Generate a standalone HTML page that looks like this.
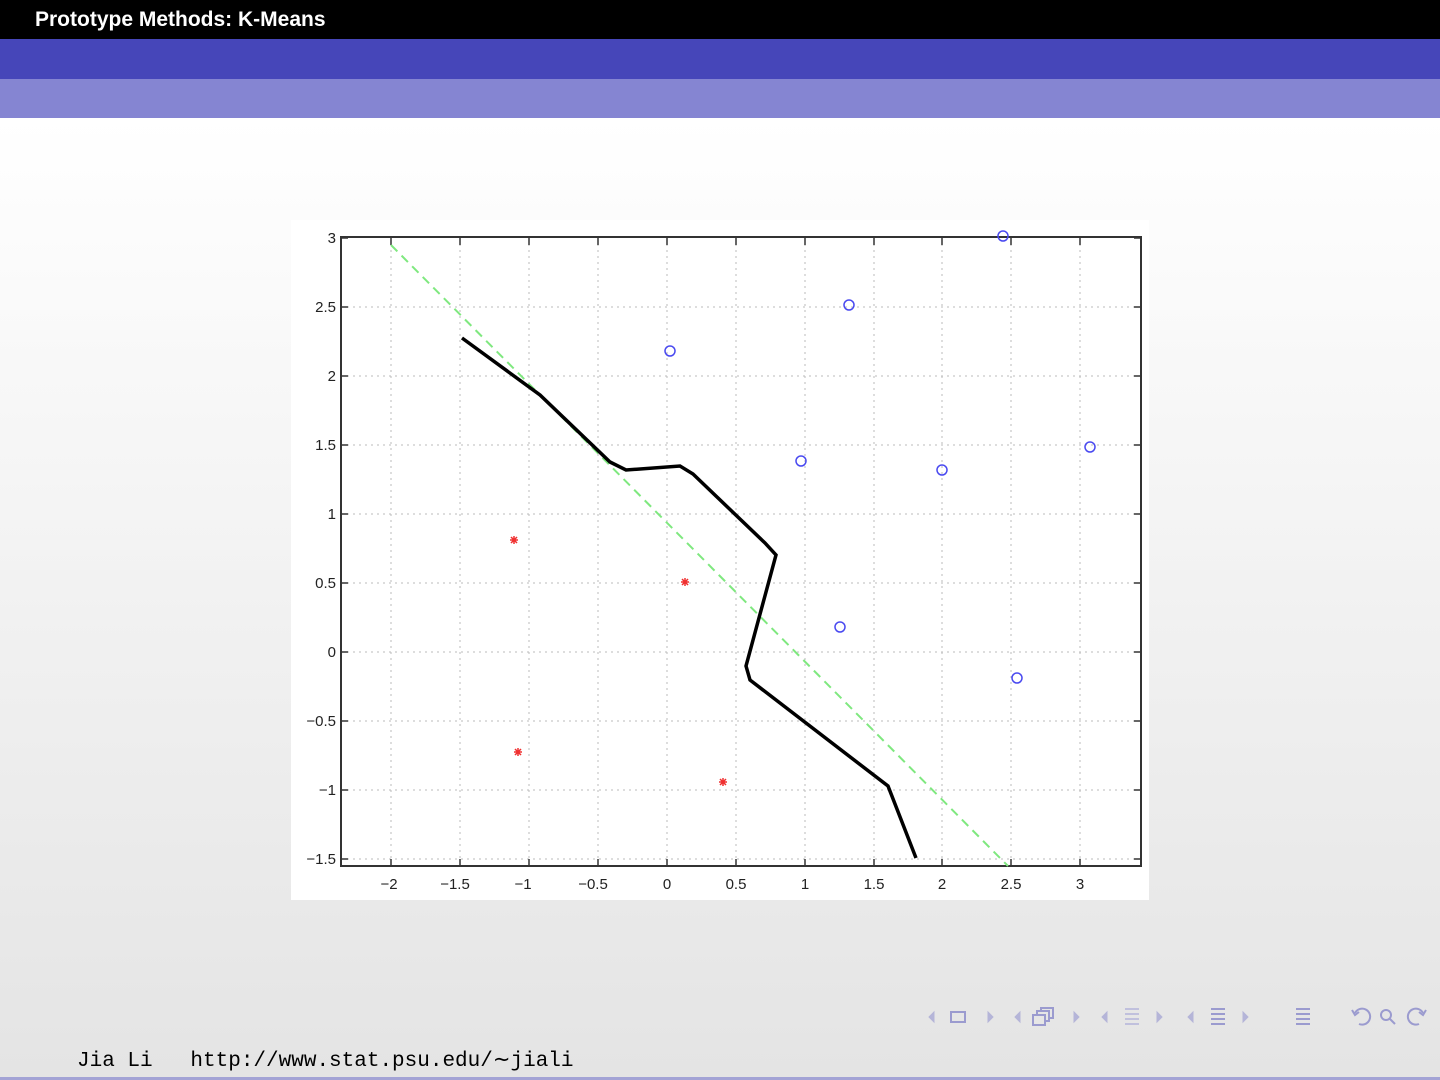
<!DOCTYPE html>
<html><head><style>
body{margin:0;width:1440px;height:1080px;overflow:hidden;font-family:"Liberation Sans",sans-serif;background:linear-gradient(#fff 118px,#e4e4e4 1080px);position:relative}
.h1{position:absolute;left:0;top:0;width:1440px;height:39px;background:#000;color:#fff;font-weight:bold;font-size:21px;line-height:39px}
.h1 span{margin-left:35px}
.h2{position:absolute;top:39px;height:40px;width:1440px;background:#4646b9}
.h3{position:absolute;top:79px;height:39px;width:1440px;background:#8585d2}
.foot{position:absolute;top:1047px;left:77px;font-family:"Liberation Mono",monospace;font-size:21px;color:#000;white-space:pre}
.line{position:absolute;top:1077px;left:0;width:1440px;height:3px;background:#a3a3d5}
</style></head><body>
<div class="h1"><span>Prototype Methods: K-Means</span></div>
<div class="h2"></div><div class="h3"></div>
<svg style="position:absolute;left:0;top:0" width="1440" height="1080">
<rect x="291" y="220" width="858" height="680" fill="#fff"/>
<g stroke="#bbb" stroke-dasharray="2,4" stroke-width="1">
<path d="M391 238V866M460 238V866M529 238V866M598 238V866M667 238V866M736 238V866M805 238V866M874 238V866M942 238V866M1011 238V866M1080 238V866"/>
<path d="M341 307H1141M341 376H1141M341 445H1141M341 514H1141M341 583H1141M341 652H1141M341 721H1141M341 790H1141M341 859H1141"/>
</g>
<g stroke="#333" stroke-width="1.5">
<path d="M391 238v7M460 238v7M529 238v7M598 238v7M667 238v7M736 238v7M805 238v7M874 238v7M942 238v7M1011 238v7M1080 238v7"/>
<path d="M391 866v-7M460 866v-7M529 866v-7M598 866v-7M667 866v-7M736 866v-7M805 866v-7M874 866v-7M942 866v-7M1011 866v-7M1080 866v-7"/>
<path d="M341 238h7M341 307h7M341 376h7M341 445h7M341 514h7M341 583h7M341 652h7M341 721h7M341 790h7M341 859h7"/>
<path d="M1141 238h-7M1141 307h-7M1141 376h-7M1141 445h-7M1141 514h-7M1141 583h-7M1141 652h-7M1141 721h-7M1141 790h-7M1141 859h-7"/>
</g>
<rect x="341" y="237" width="800" height="629" fill="none" stroke="#333" stroke-width="2"/>
<g font-size="15" fill="#222" text-anchor="end">
<text x="336" y="243">3</text><text x="336" y="312">2.5</text><text x="336" y="381">2</text><text x="336" y="450">1.5</text><text x="336" y="519">1</text><text x="336" y="588">0.5</text><text x="336" y="657">0</text><text x="336" y="726">−0.5</text><text x="336" y="795">−1</text><text x="336" y="864">−1.5</text>
</g>
<g font-size="15" fill="#222" text-anchor="middle">
<text x="389" y="889">−2</text><text x="455" y="889">−1.5</text><text x="523" y="889">−1</text><text x="593" y="889">−0.5</text><text x="667" y="889">0</text><text x="736" y="889">0.5</text><text x="805" y="889">1</text><text x="874" y="889">1.5</text><text x="942" y="889">2</text><text x="1011" y="889">2.5</text><text x="1080" y="889">3</text>
</g>
<path d="M391 245L1008 866" stroke="#7fe87f" stroke-width="2" stroke-dasharray="9,6"/>
<polyline points="462,338 540,395 610,462 626,470 680,466 693,474 765,543 776,555 746,666 750,680 888,786 916,858" fill="none" stroke="#000" stroke-width="3.5"/>
<g fill="none" stroke="#4a4af0" stroke-width="1.5">
<circle cx="670" cy="351" r="5"/><circle cx="849" cy="305" r="5"/><circle cx="1003" cy="236" r="5"/><circle cx="801" cy="461" r="5"/><circle cx="942" cy="470" r="5"/><circle cx="1090" cy="447" r="5"/><circle cx="840" cy="627" r="5"/><circle cx="1017" cy="678" r="5"/>
</g>
<g stroke="#f03030" stroke-width="1.5">
<path d="M510 540h8M514 536v8M511 537l6 6M517 537l-6 6"/>
<path d="M681 582h8M685 578v8M682 579l6 6M688 579l-6 6"/>
<path d="M514 752h8M518 748v8M515 749l6 6M521 749l-6 6"/>
<path d="M719 782h8M723 778v8M720 779l6 6M726 779l-6 6"/>
</g>
<g fill="#b5b5d8" stroke="#b5b5d8">
<path d="M934 1012v10l-5-5z M988 1012v10l5-5z M1020 1012v10l-5-5z M1074 1012v10l5-5z M1107 1012v10l-5-5z M1157 1012v10l5-5z M1193 1012v10l-5-5z M1243 1012v10l5-5z"/>
</g>
<g fill="none" stroke="#9b9bcf" stroke-width="2">
<rect x="951" y="1012" width="14" height="10"/>
<rect x="1033" y="1015" width="12" height="10"/><path d="M1037 1015v-4h12v10h-4M1041 1011v-3h12v10h-4"/>
<path d="M1125 1009h14M1125 1014h14M1125 1019h14M1125 1024h14" stroke="#c0c0dd"/>
<path d="M1211 1009h14M1211 1014h14M1211 1019h14M1211 1024h14"/>
<path d="M1296 1009h14M1296 1014h14M1296 1019h14M1296 1024h14"/>
<path d="M1355 1013a8 8 0 1 1 4 11"/><path d="M1352 1010l3 5 4-3"/>
<circle cx="1386" cy="1015" r="5"/><path d="M1390 1019l5 5"/>
<path d="M1423 1013a8 8 0 1 0-4 11"/><path d="M1426 1010l-3 5-4-3"/>
</g>
</svg>
<div class="foot">Jia Li   http://www.stat.psu.edu/<span style="font-family:'DejaVu Sans',sans-serif">∼</span>jiali</div>
<div class="line"></div>
</body></html>
